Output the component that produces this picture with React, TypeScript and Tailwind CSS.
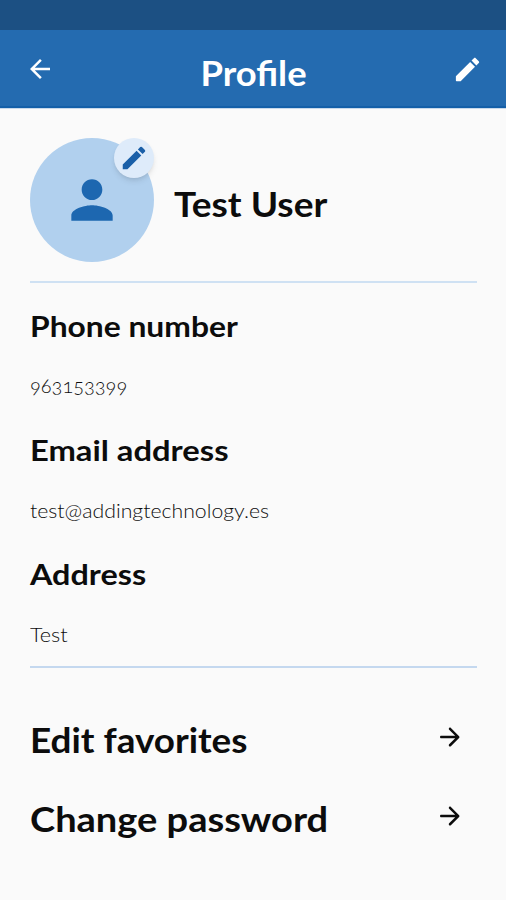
import React from 'react'
import { MdArrowBack, MdEdit, MdPerson } from 'react-icons/md'

type FieldType = {
  label: string
  value: string
  labelClass: string
  valueClass: string
}

type LinkType = {
  label: string
  labelClass: string
}

const fields: FieldType[] = [
  { label: 'Phone number', value: '963153399', labelClass: 'scale-x-[1.096]', valueClass: 'mt-[27px]' },
  { label: 'Email address', value: 'test@addingtechnology.es', labelClass: 'scale-x-[1.128]', valueClass: 'mt-[28px] scale-x-[1.062]' },
  { label: 'Address', value: 'Test', labelClass: 'scale-x-[1.115]', valueClass: 'mt-[28px] scale-x-[1.08]' },
]

const links: LinkType[] = [
  { label: 'Edit favorites', labelClass: 'scale-x-[1.084]' },
  { label: 'Change password', labelClass: 'scale-x-[1.118]' },
]

/* rounded variants of the material icons */
const IconEdit: React.FC = () => (
  <svg viewBox="0 0 24 24" fill="currentColor" className="h-[31px] w-[31px]">
    <path d="M3 17.46v3.04c0 .28.22.5.5.5h3.04c.13 0 .26-.05.35-.15L17.81 9.94l-3.75-3.75L3.15 17.1c-.1.1-.15.22-.15.36zM20.71 7.04c.39-.39.39-1.02 0-1.41l-2.34-2.34c-.39-.39-1.02-.39-1.41 0l-1.83 1.83 3.75 3.75 1.83-1.83z" />
  </svg>
)

const IconForward: React.FC = () => (
  <svg viewBox="0 0 24 24" fill="currentColor" className="mt-[1px] h-[30px] w-[30px]">
    <path d="M5 13h11.17l-4.88 4.88c-.39.39-.39 1.03 0 1.42.39.39 1.02.39 1.41 0l6.59-6.59c.39-.39.39-1.02 0-1.41l-6.58-6.6c-.39-.39-1.02-.39-1.41 0-.39.39-.39 1.02 0 1.41L16.17 11H5c-.55 0-1 .45-1 1s.45 1 1 1z" />
  </svg>
)

const Header: React.FC = () => {
  return (
    <header className="flex h-[78px] items-start justify-between border-b-2 border-[#145fa8] bg-[#246bb0] pl-[25px] pr-[23px] text-white shadow-[0_1px_0_#c9d9ea]">
      <button className="mt-[24px]">
        <MdArrowBack className="h-[30px] w-[30px]" />
      </button>
      <h1 className="mt-[23px] scale-x-[1.07] text-[34px] font-bold leading-[40px]">Profile</h1>
      <button className="mt-[24px]">
        <IconEdit />
      </button>
    </header>
  )
}

const Avatar: React.FC = () => {
  return (
    <div className="relative flex h-[124px] w-[124px] items-center justify-center rounded-full bg-[#b1d0ee]">
      <MdPerson className="h-[62px] w-[62px] text-[#1d67b0]" />
      <button className="absolute right-0 top-0 flex h-10 w-10 items-center justify-center rounded-full bg-[#deebfa] shadow-md">
        <MdEdit className="h-[30px] w-[30px] text-[#1a5fa8]" />
      </button>
    </div>
  )
}

const Field: React.FC<FieldType> = ({ label, value, labelClass, valueClass }) => {
  return (
    <div className="flex h-[124px] flex-col items-start">
      <h3 className={`origin-left text-[29px] font-bold leading-[36px] ${labelClass}`}>{label}</h3>
      <p className={`origin-left text-[20px] font-light leading-[28px] oldstyle-nums ${valueClass}`}>{value}</p>
    </div>
  )
}

const LinkRow: React.FC<LinkType> = ({ label, labelClass }) => {
  return (
    <div className="flex h-[79px] items-start justify-between pr-[12px]">
      <span className={`-mt-px origin-left whitespace-nowrap text-[34px] font-bold leading-[40px] ${labelClass}`}>
        {label}
      </span>
      <IconForward />
    </div>
  )
}

const App: React.FC = () => {
  return (
    <div className="h-[900px] w-[506px] overflow-hidden bg-[#fafafa] font-['Lato',sans-serif] text-[#0c0c0c]">
      <div className="h-[30px] bg-[#1c5083]" />
      <Header />
      <main className="pl-[30px] pr-[29px] pt-[30px]">
        <div className="flex items-center gap-[20px] border-b-2 border-[#cfe1f3] pb-[19px]">
          <Avatar />
          <h2 className="mt-[8px] origin-left scale-x-[1.09] whitespace-nowrap text-[34px] font-bold leading-[40px]">
            Test User
          </h2>
        </div>
        <div className="h-[385px] border-b-2 border-[#c4d8ef] pt-[25px]">
          {fields.map((field) => (
            <Field key={field.label} {...field} />
          ))}
        </div>
        <div className="pt-[53px]">
          {links.map((link) => (
            <LinkRow key={link.label} {...link} />
          ))}
        </div>
      </main>
    </div>
  )
}

export default App
